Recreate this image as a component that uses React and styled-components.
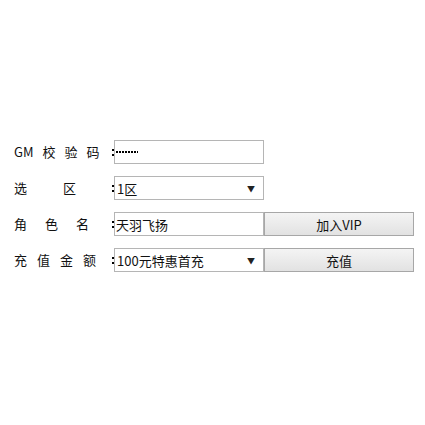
import React from "react";
import styled, { createGlobalStyle } from "styled-components";

const Global = createGlobalStyle`
  html, body { margin: 0; padding: 0; background: #ffffff; }
  body {
    font-family: "Noto Sans CJK SC", "Liberation Sans", sans-serif;
    color: #111;
  }
`;

const Form = styled.div`
  display: flex;
  flex-direction: column;
  gap: 12px;
  padding: 140px 0 0 14px;
`;

const Row = styled.div`
  display: flex;
  align-items: center;
  height: 24px;
`;

const Label = styled.div`
  display: flex;
  align-items: center;
  gap: ${(p) => p.$gap}px;
  width: 98px;
  font-size: 13px;
  line-height: 24px;
  color: #111;
`;

const Colon = styled.span`
  display: flex;
  flex-direction: column;
  gap: 3px;
  width: 2px;
  &::before,
  &::after {
    content: "";
    width: 2px;
    height: 2px;
    background: #000;
  }
`;

const Field = styled.div`
  box-sizing: border-box;
  width: 150px;
  height: 24px;
  border: 1px solid #b5b5b5;
  background: #fff;
  display: flex;
  align-items: center;
  justify-content: space-between;
  padding: 0 8px 0 ${(p) => p.$pad ?? 1}px;
  font-size: 13px;
  color: #111;
  white-space: nowrap;
`;

/* masked password: a row of small square bullets */
const Dots = styled.span`
  width: ${(p) => p.$count * 3 + 1}px;
  height: 2px;
  background: repeating-linear-gradient(to right, #000 0 2px, transparent 2px 3px);
`;

const Arrow = styled.span`
  font-size: 8px;
  color: #222;
`;

const Button = styled.button`
  box-sizing: border-box;
  width: 150px;
  height: 24px;
  margin: 0;
  padding: 0;
  border: 1px solid #a7a7a7;
  border-radius: 0;
  background: linear-gradient(#f4f4f4, #e2e2e2);
  font-family: "Noto Sans CJK SC", "Liberation Sans", sans-serif;
  font-size: 13px;
  color: #111;
`;

const Chars = ({ text, gap }) => (
  <Label $gap={gap}>
    {text.map((t) => (
      <span key={t}>{t}</span>
    ))}
  </Label>
);

export default function App() {
  return (
    <>
      <Global />
      <Form>
        <Row>
          <Chars text={["GM", "校", "验", "码"]} gap={9} />
          <Colon />
          <Field $pad={1}>
            <Dots $count={7} />
          </Field>
        </Row>
        <Row>
          <Chars text={["选", "区"]} gap={36} />
          <Colon />
          <Field $pad={2}>
            <span>1区</span>
            <Arrow>▼</Arrow>
          </Field>
        </Row>
        <Row>
          <Chars text={["角", "色", "名"]} gap={18} />
          <Colon />
          <Field $pad={1}>
            <span>天羽飞扬</span>
          </Field>
          <Button>加入VIP</Button>
        </Row>
        <Row>
          <Chars text={["充", "值", "金", "额"]} gap={10} />
          <Colon />
          <Field $pad={2}>
            <span>100元特惠首充</span>
            <Arrow>▼</Arrow>
          </Field>
          <Button>充值</Button>
        </Row>
      </Form>
    </>
  );
}
